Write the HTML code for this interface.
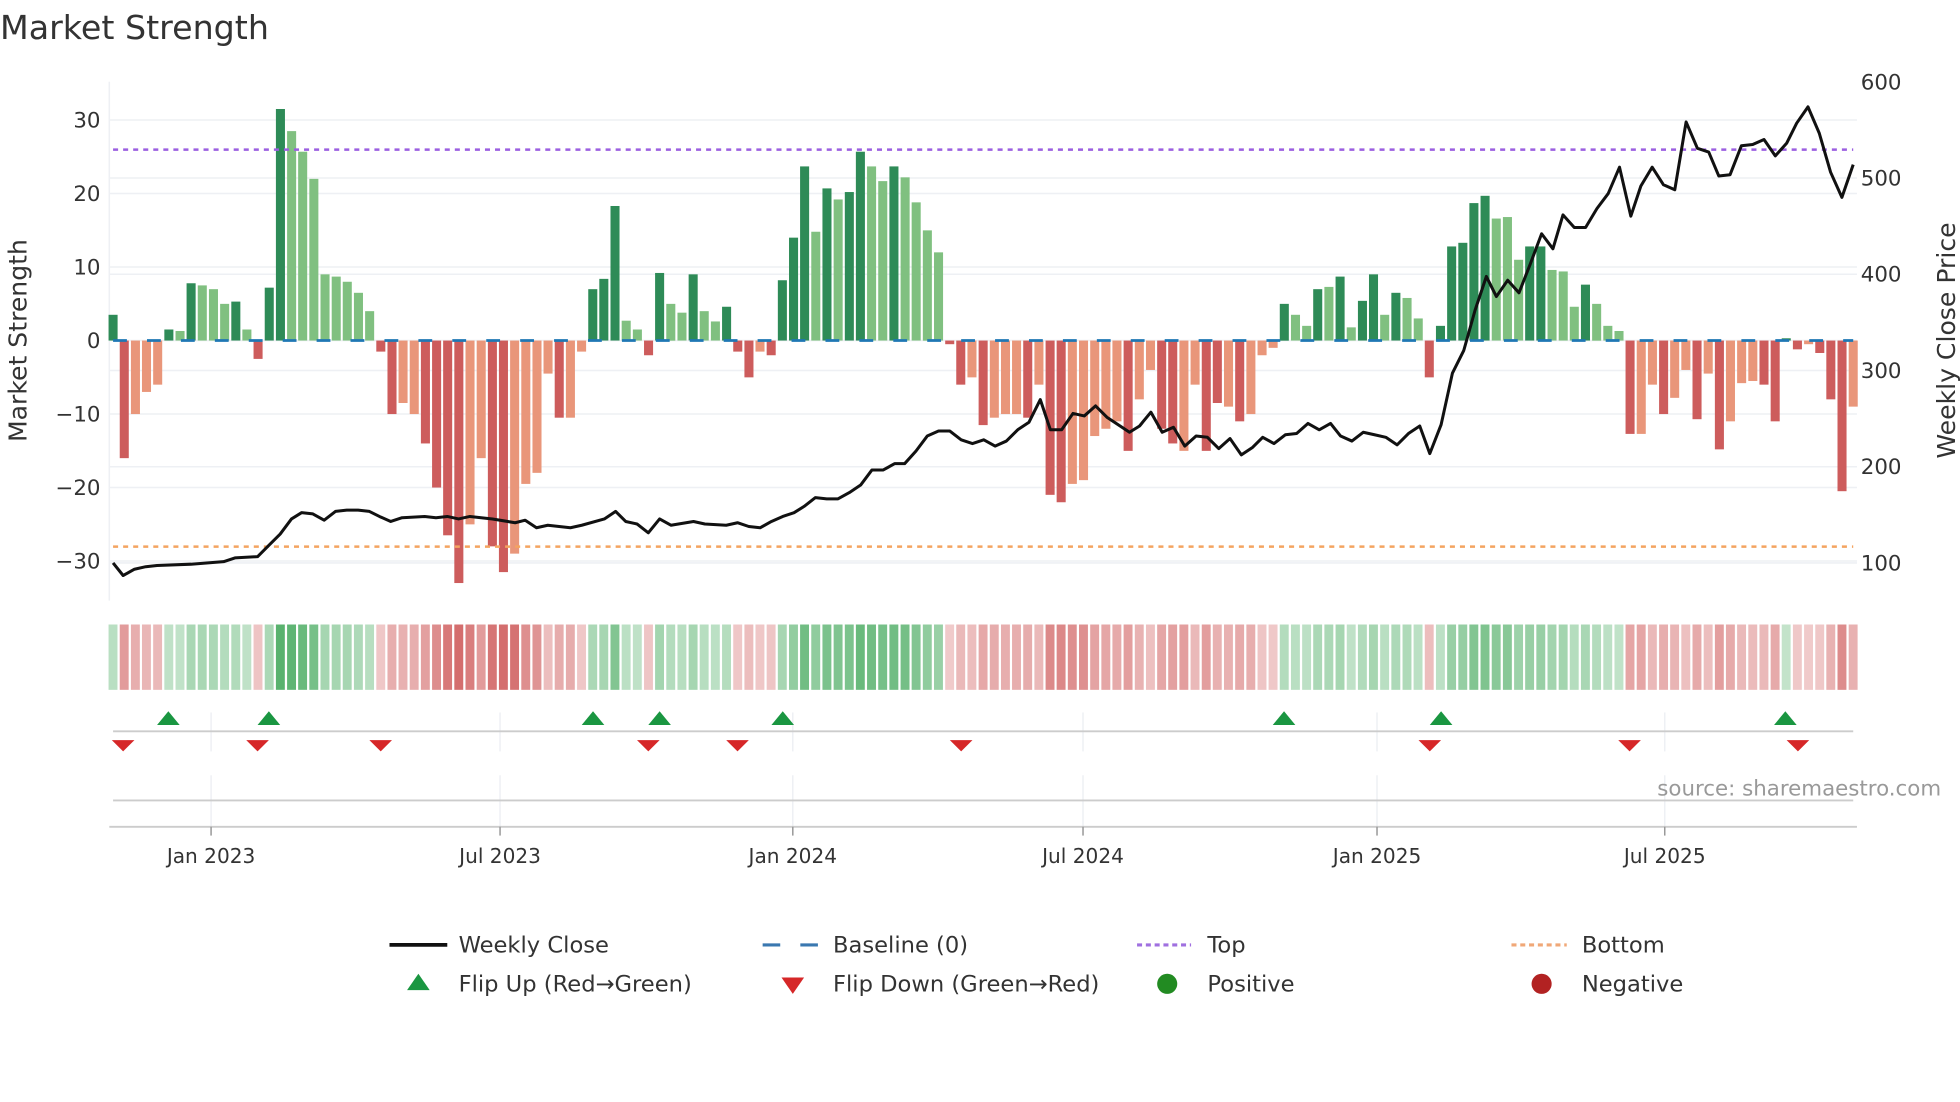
<!DOCTYPE html>
<html><head><meta charset="utf-8"><style>
html,body{margin:0;padding:0;background:#fff;}
svg{display:block;font-family:"DejaVu Sans","Liberation Sans",sans-serif;}
</style></head><body>
<svg id="s" width="1960" height="1102" viewBox="0 0 1560 877" xmlns="http://www.w3.org/2000/svg">
<rect width="1560" height="877" fill="#fff"/>
<text x="0" y="31" font-size="26.5" fill="#333">Market Strength</text>
<g id="grid" stroke="#eef0f4" stroke-width="1.2"></g>
<line x1="87" y1="65" x2="87" y2="478" stroke="#eef0f4" stroke-width="1.2"/>
<g id="bars"></g>
<line x1="90" y1="119" x2="1475" y2="119" stroke="#9b5fe0" stroke-width="2" stroke-dasharray="4 4"/>
<line x1="90" y1="435" x2="1475" y2="435" stroke="#f4a460" stroke-width="2" stroke-dasharray="4 4"/>
<line x1="90" y1="271" x2="1475" y2="271" stroke="#1f77b4" stroke-width="2.2" stroke-dasharray="11 16"/>
<polyline id="price" fill="none" stroke="#111" stroke-width="2.4" stroke-linejoin="round"/>
<g id="ylab" font-size="17" fill="#333" text-anchor="end"></g>
<g id="ylab2" font-size="17" fill="#333"></g>
<text transform="translate(21,271) rotate(-90)" font-size="20" fill="#333" text-anchor="middle">Market Strength</text>
<text transform="translate(1556,271) rotate(-90)" font-size="20" fill="#333" text-anchor="middle">Weekly Close Price</text>
<g id="strip"></g>
<g id="vg" stroke="#eef0f4" stroke-width="1.2"></g>
<line x1="90" y1="582" x2="1475" y2="582" stroke="#ccc" stroke-width="1.5"/>
<line x1="90" y1="637" x2="1475" y2="637" stroke="#ccc" stroke-width="1.5"/>
<line x1="87" y1="658" x2="1478" y2="658" stroke="#ccc" stroke-width="1.5"/>
<g id="marks"></g>
<g id="dates" font-size="16" fill="#333" text-anchor="middle"></g>
<text x="1545" y="633" font-size="17" fill="#999" text-anchor="end">source: sharemaestro.com</text>
<g font-size="18" fill="#333">
<line x1="310" y1="752" x2="356" y2="752" stroke="#111" stroke-width="3"/>
<text x="365" y="758">Weekly Close</text>
<line x1="607" y1="752" x2="651" y2="752" stroke="#3a78b0" stroke-width="2.5" stroke-dasharray="14 16"/>
<text x="663" y="758">Baseline (0)</text>
<line x1="905" y1="752" x2="948" y2="752" stroke="#a070e0" stroke-width="2.5" stroke-dasharray="4 3"/>
<text x="961" y="758">Top</text>
<line x1="1203" y1="752" x2="1247" y2="752" stroke="#f0a878" stroke-width="2.5" stroke-dasharray="4 3"/>
<text x="1259" y="758">Bottom</text>
<polygon points="324,788 342,788 333,775" fill="#1a9641"/>
<text x="365" y="789">Flip Up (Red→Green)</text>
<polygon points="622,778 640,778 631,791" fill="#d62728"/>
<text x="663" y="789">Flip Down (Green→Red)</text>
<circle cx="929" cy="783" r="8" fill="#228b22"/>
<text x="961" y="789">Positive</text>
<circle cx="1227" cy="783" r="8" fill="#b22222"/>
<text x="1259" y="789">Negative</text>
</g>
</svg>
<script>
var NS="http://www.w3.org/2000/svg";
function el(p,t,a,txt){var e=document.createElementNS(NS,t);for(var k in a)e.setAttribute(k,a[k]);if(txt!=null)e.textContent=txt;document.getElementById(p).appendChild(e);return e;}
var V=[[3.5,1],[-16,1],[-10,0],[-7,0],[-6,0],[1.5,1],[1.3,0],[7.8,1],[7.5,0],[7,0],[5,0],[5.3,1],[1.5,0],[-2.5,1],[7.2,1],[31.5,1],[28.5,0],[25.7,0],[22,0],[9,0],[8.7,0],[8,0],[6.5,0],[4,0],[-1.5,1],[-10,1],[-8.5,0],[-10,0],[-14,1],[-20,1],[-26.5,1],[-33,1],[-25,0],[-16,0],[-28,1],[-31.5,1],[-29,0],[-19.5,0],[-18,0],[-4.5,0],[-10.5,1],[-10.5,0],[-1.5,0],[7,1],[8.4,1],[18.3,1],[2.7,0],[1.5,0],[-2,1],[9.2,1],[5,0],[3.8,0],[9,1],[4,0],[2.6,0],[4.6,1],[-1.5,1],[-5,1],[-1.5,0],[-2,1],[8.2,1],[14,1],[23.7,1],[14.8,0],[20.7,1],[19.2,0],[20.2,1],[25.7,1],[23.7,0],[21.7,0],[23.7,1],[22.2,0],[18.8,0],[15,0],[12,0],[-0.5,1],[-6,1],[-5,0],[-11.5,1],[-10.5,0],[-10,0],[-10,0],[-10.5,1],[-6,0],[-21,1],[-22,1],[-19.5,0],[-19,0],[-13,0],[-12,0],[-11,0],[-15,1],[-8,0],[-4,0],[-12,1],[-14,1],[-15,0],[-6,0],[-15,1],[-8.5,1],[-9,0],[-11,1],[-10,0],[-2,0],[-1,0],[5,1],[3.5,0],[2,0],[7,1],[7.3,0],[8.7,1],[1.8,0],[5.4,1],[9,1],[3.5,0],[6.5,1],[5.8,0],[3,0],[-5,1],[2,1],[12.8,1],[13.3,1],[18.7,1],[19.7,1],[16.6,0],[16.8,0],[11,0],[12.8,1],[12.8,1],[9.6,0],[9.4,0],[4.6,0],[7.6,1],[5,0],[2,0],[1.3,0],[-12.7,1],[-12.7,0],[-6,0],[-10,1],[-7.8,0],[-4,0],[-10.7,1],[-4.5,0],[-14.8,1],[-11,0],[-5.8,0],[-5.5,0],[-6,1],[-11,1],[0.3,1],[-1.2,1],[-0.5,0],[-1.7,1],[-8,1],[-20.5,1],[-9,0]];
var step=(1475-90)/(V.length-1);
var Y0=271,K=5.85;
V.forEach(function(v,i){
 var x=90+i*step, val=v[0], h=Math.abs(val)*K, c;
 if(val>=0)c=v[1]?"#2e8b57":"#80c080";else c=v[1]?"#cd5c5c":"#e9967a";
 el("bars","rect",{x:(x-3.6).toFixed(1),y:(val>=0?Y0-h:Y0).toFixed(1),width:7.2,height:Math.max(h,1).toFixed(1),fill:c});
 var a=0.3+0.55*Math.min(Math.abs(val)/30,1);
 var sc=val>=0?"rgba(60,165,85,"+a.toFixed(2)+")":"rgba(205,85,85,"+a.toFixed(2)+")";
 el("strip","rect",{x:(x-4.4+0.8).toFixed(1),y:497,width:(step-1.8).toFixed(1),height:52,fill:sc});
});
[30,20,10,0,-10,-20,-30].forEach(function(t){var y=Y0-t*K;el("grid","line",{x1:87,y1:y,x2:1478,y2:y});el("ylab","text",{x:80,y:y+6},t<0?"−"+(-t):t);});
[600,500,400,300,200,100].forEach(function(p){var y=448-(p-100)*0.766;el("ylab2","text",{x:1481,y:y+6},p);if(p!=600)el("grid","line",{x1:87,y1:y,x2:1478,y2:y});});
var P="90,448 98,458 107,453 116,451 125,450 152,449 178,447 187,444 205,443 214,434 223,425 232,413 240,408 249,409 258,414 267,407 276,406 285,406 294,407 302,411 311,415 320,412 338,411 347,412 356,411 365,413 374,411 392,413 410,416 418,414 427,420 436,418 454,420 463,418 481,413 490,407 498,415 507,417 516,424 525,413 534,418 552,415 561,417 578,418 587,416 596,419 605,420 614,415 623,411 632,408 640,403 649,396 658,397 667,397 676,392 685,386 694,374 703,374 712,369 720,369 729,359 738,347 747,343 756,343 765,350 774,353 783,350 792,355 801,351 810,342 819,336 828,318 836,342 845,342 854,329 863,331 872,323 881,332 890,338 899,344 907,339 916,328 925,344 934,340 943,355 952,347 961,348 970,357 979,349 988,362 997,356 1005,348 1014,353 1023,346 1032,345 1041,337 1050,342 1059,337 1067,347 1076,351 1085,344 1094,346 1103,348 1112,354 1121,345 1130,339 1138,361 1147,338 1156,297 1165,279 1174,247 1183,220 1191,236 1200,223 1209,233 1218,210 1227,186 1236,198 1244,171 1253,181 1262,181 1271,166 1280,154 1289,133 1298,172 1306,148 1315,133 1324,147 1333,151 1342,97 1351,118 1360,121 1368,140 1377,139 1386,116 1395,115 1404,111 1413,124 1422,114 1430,98 1439,85 1448,106 1457,137 1466,157 1475,131";
document.getElementById("price").setAttribute("points",P);
var D=[[168,"Jan 2023"],[398,"Jul 2023"],[631,"Jan 2024"],[862,"Jul 2024"],[1096,"Jan 2025"],[1325,"Jul 2025"]];
D.forEach(function(d){el("vg","line",{x1:d[0],y1:567,x2:d[0],y2:598});el("vg","line",{x1:d[0],y1:617,x2:d[0],y2:658});
 el("dates","line",{x1:d[0],y1:658,x2:d[0],y2:665,stroke:"#999","stroke-width":1.2});
 el("dates","text",{x:d[0],y:687},d[1]);});
[134,214,472,525,623,1022,1147,1421].forEach(function(x){el("marks","polygon",{points:(x-9)+",577 "+(x+9)+",577 "+x+",566",fill:"#1a9641"});});
[98,205,303,516,587,765,1138,1297,1431].forEach(function(x){el("marks","polygon",{points:(x-9)+",589 "+(x+9)+",589 "+x+",598",fill:"#d62728"});});
</script>
</body></html>
